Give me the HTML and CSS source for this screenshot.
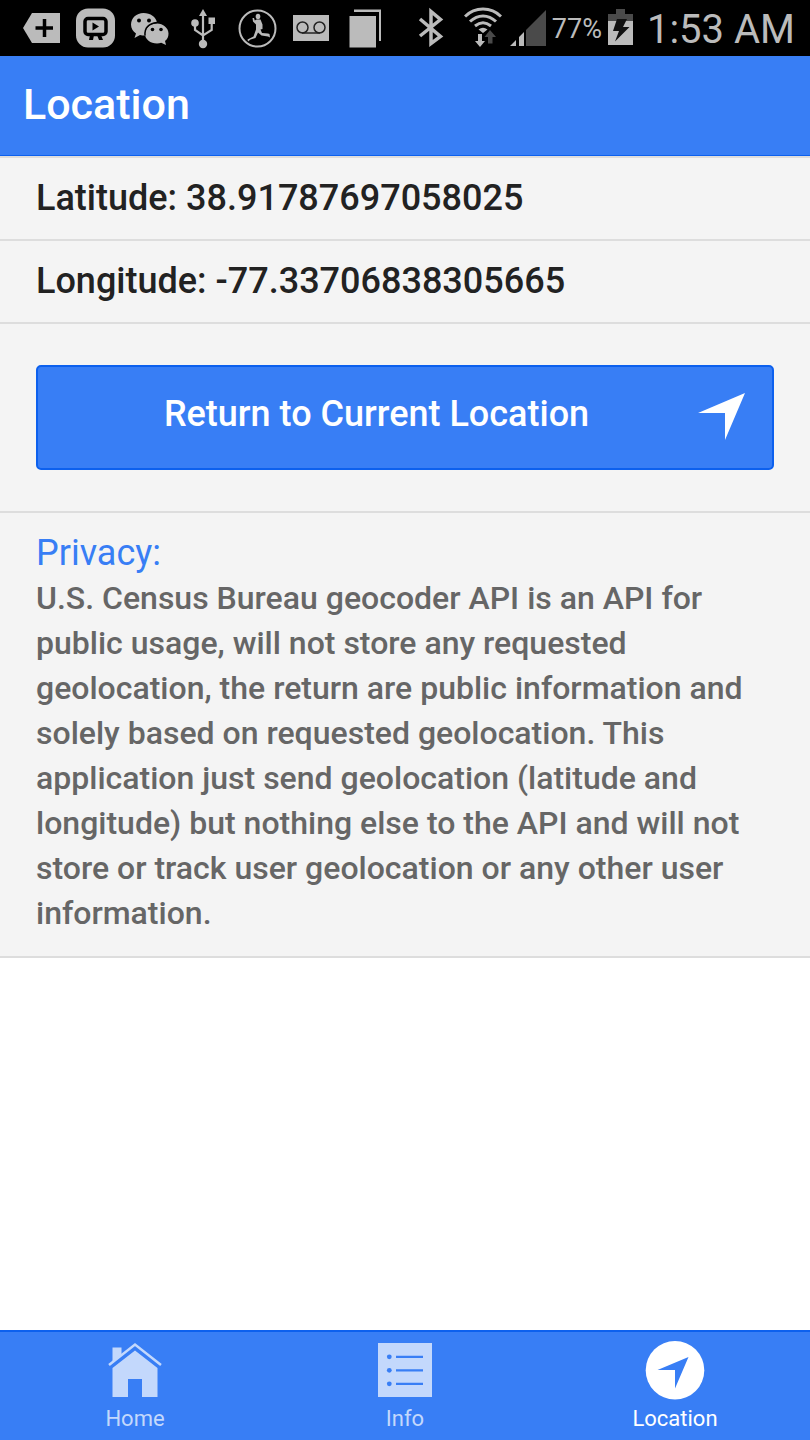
FILE: index.html
```html
<!DOCTYPE html>
<html lang="en">
<head>
<meta charset="utf-8">
<meta name="viewport" content="width=device-width, initial-scale=1">
<title>Location</title>
<link rel="stylesheet" href="styles.css">
</head>
<body>
<div class="status-bar">
  <div class="notifications">
    <svg width="54" height="56" viewBox="0 0 54 56"><path fill="currentColor" d="M9 28 18 13H46V43H18Z"/><path d="M30.500 19V37M21.500 28H39" stroke="#000" stroke-width="3.500"/></svg>
    <svg width="54" height="56" viewBox="0 0 54 56"><rect x="8" y="8.500" width="39" height="39" rx="12" fill="currentColor"/><rect x="17" y="18.500" width="21" height="16" rx="3" fill="none" stroke="#000" stroke-width="3.500"/><path d="M24.500 22.500V30.500L31 26.500ZM22 35H26L25 40H21ZM29 35H33L35 40H31Z"/></svg>
    <svg width="54" height="56" viewBox="0 0 54 56"><g transform="translate(-6)"><path fill="currentColor" d="M27.500 13C20.500 13 15 18 15 24.500c0 4 2 7 5 9L18.500 38l5.500-3c1.500.5 3 .5 5 .5C28 28 34 23 41 22.500 40 17 34.500 13 27.500 13Z"/><path fill="currentColor" d="M41 23.500c-6.500 0-12 4.500-12 10.200S34.500 43.500 41 43.500c1.500 0 3-.2 4.200-.7L50 45l-1-4c2.500-2 3.500-4.500 3.500-7.500 0-5.500-5.500-10-11.500-10Z"/><path d="M29 35.500C28.500 28 33 23.500 41 22.600" fill="none" stroke="#000" stroke-width="1.500"/><circle cx="23" cy="20.500" r="2"/><circle cx="33" cy="20.500" r="2"/><circle cx="36.500" cy="29.500" r="1.800"/><circle cx="45" cy="29.500" r="1.800"/></g></svg>
    <svg width="54" height="56" viewBox="0 0 54 56"><g fill="currentColor"><path d="M27 9 31 16H23Z"/><circle cx="27" cy="44" r="4.200"/><circle cx="19" cy="23" r="3.800"/><rect x="32.500" y="17.500" width="6.500" height="6.500"/></g><path d="M27 14V42M19 24V30L27 35.500 35.700 30V23" fill="none" stroke="currentColor" stroke-width="2.200"/></svg>
    <svg width="54" height="56" viewBox="0 0 54 56"><circle cx="27.500" cy="28.500" r="18" fill="none" stroke="currentColor" stroke-width="2"/><g fill="currentColor"><ellipse cx="28" cy="16.500" rx="2.300" ry="2.800"/><path d="M26.500 19.500H30.500L32.500 24.500V29L30.500 29.500 32 33 38 33.500 39.500 34 40 37.500 38 36.500 31.500 35.500 28 32.500 25.500 38 20.500 39.500 18 41.500 17.500 39.500 23.500 36.500 26 29.500V24.500L23 21.500 22.500 18 24 18 24.800 20.500Z"/></g></svg>
    <svg width="54" height="56" viewBox="0 0 54 56"><rect x="9" y="15" width="36" height="26" fill="currentColor"/><g fill="none" stroke="#222" stroke-width="1.500"><circle cx="18.500" cy="27.500" r="5.500"/><circle cx="35.500" cy="27.500" r="5.500"/><path d="M18 33H36"/></g></svg>
    <svg width="54" height="56" viewBox="0 0 54 56"><path fill="currentColor" d="M11.500 16H38V47.500H11.500ZM16 9.500H43V41H41V12H16Z"/></svg>
  </div>
  <div class="system">
    <svg width="26" height="56" viewBox="0 0 26 56"><path d="M2 19 22.500 36.500 13 43.500V11.500L22.500 19.500 2 36" fill="none" stroke="currentColor" stroke-width="3.500"/></svg>
    <svg class="wifi" width="38" height="56" viewBox="0 0 38 56"><g fill="none" stroke="currentColor" stroke-width="3"><path d="M1 16.500C11 6.500 27 6.500 37 16.500M6 21.500C14 14 24 14 32 21.500M11 26C16 22 22 22 27 26"/></g><path fill="currentColor" d="M14.500 29.500Q19 26 23.500 29.500L19 33ZM14 34H18V41H21L16 47 11 41H14Z"/><path fill="#4a4a4a" d="M26 30 32 37H28.500V43.500H24V37H20.500Z"/></svg>
    <svg class="signal" width="36" height="56" viewBox="0 0 36 56"><path fill="currentColor" d="M0 46 6 40V46ZM9 37 14 32V46H9Z"/><path fill="#4a4a4a" d="M16 30 36 10V46H16Z"/></svg>
    <span class="percent">77%</span>
    <svg class="battery" width="25" height="56" viewBox="0 0 25 56"><path fill="#4a4a4a" d="M8 9H17V14H25V21H0V14H8Z"/><path fill="currentColor" d="M0 21H25V45H0Z"/><path fill="#111" d="M9 19H19L15 27H21.500L7 41.500 11 31H5Z"/></svg>
    <time class="clock">1:53 AM</time>
  </div>
</div>
<header class="title-bar"><h1>Location</h1></header>
<main class="content">
  <section class="item coordinate">Latitude: 38.91787697058025</section>
  <section class="item coordinate">Longitude: -77.33706838305665</section>
  <section class="item action">
    <button class="return-button" type="button">
      <span class="button-label">Return to Current Location</span>
      <svg width="47" height="52" viewBox="0 0 47 52"><path fill="currentColor" d="M0 25 47 5 27 52V25Z"/></svg>
    </button>
  </section>
  <section class="item privacy">
    <h2>Privacy:</h2>
    <p>U.S. Census Bureau geocoder API is an API for public usage, will not store any requested geolocation, the return are public information and solely based on requested geolocation. This application just send geolocation (latitude and longitude) but nothing else to the API and will not store or track user geolocation or any other user information.</p>
  </section>
</main>
<nav class="tabs">
  <a class="tab" href="#home">
    <svg width="60" height="60" viewBox="0 0 60 60"><path fill="currentColor" d="M30 9.500 52.500 27V56H37V38H23V56H7.500V27Z"/><path d="M4 24 30 3.500 56 24" fill="none" stroke="#387ef5" stroke-width="6"/><path fill="currentColor" d="M7.500 6.500H16.500V14L7.500 21Z"/><path d="M4 24 30 3.500 56 24" fill="none" stroke="currentColor" stroke-width="2.500"/></svg>
    <span>Home</span>
  </a>
  <a class="tab" href="#info">
    <svg width="60" height="60" viewBox="0 0 60 60"><path fill="currentColor" d="M3 2H57V56H3Z"/><g fill="#387ef5"><circle cx="14.300" cy="15.800" r="2.400"/><circle cx="14.300" cy="29.300" r="2.400"/><circle cx="14.300" cy="42.800" r="2.400"/><path d="M21 14.700H48V17H21ZM21 28.200H48V30.500H21ZM21 41.700H48V44H21Z"/></g></svg>
    <span>Info</span>
  </a>
  <a class="tab active" href="#location" aria-current="page">
    <svg width="60" height="60" viewBox="0 0 60 60"><circle cx="30" cy="29.300" r="29.300" fill="currentColor"/><path fill="#387ef5" d="M12.500 29 43.500 16 30 47.500V29Z"/></svg>
    <span>Location</span>
  </a>
</nav>
</body>
</html>
```
FILE: styles.css
```css
* {
  box-sizing: border-box;
}

body {
  margin: 0;
  min-height: 100vh;
  display: flex;
  flex-direction: column;
  background: #fff;
  color: #222;
  font-family: Roboto, "Noto Sans", sans-serif;
}

svg {
  display: block;
  flex: none;
}

h1, h2, p {
  margin: 0;
}

.status-bar {
  display: flex;
  justify-content: space-between;
  height: 56px;
  padding: 0 15px 0 14px;
  background: #000;
  color: #bbb;
}

.notifications, .system {
  display: flex;
  align-items: center;
}

.wifi {
  margin-left: 20px;
}

.signal {
  margin-left: 8px;
}

.percent {
  margin-left: 6px;
  padding-top: 2px;
  font-size: 27px;
}

.battery {
  margin-left: 6px;
}

.clock {
  margin-left: 14px;
  padding-top: 2px;
  font-size: 40px;
}

.title-bar {
  padding: 0 23px 2px;
  background: #387ef5;
  border-bottom: 1px solid #0c60ee;
  color: #fff;
}

.title-bar h1 {
  font-size: 43px;
  font-weight: 500;
  line-height: 97px;
}

.content {
  flex: 1;
  border-top: 2px solid #ddd;
}

.item {
  padding: 18px 36px 20px;
  background: #f4f4f4;
  border-bottom: 2px solid #ddd;
}

.coordinate {
  padding-bottom: 18px;
  font-size: 36px;
  font-weight: 500;
  line-height: 45px;
}

.action {
  padding: 41px 36px;
}

.return-button {
  display: flex;
  align-items: center;
  width: 100%;
  height: 105px;
  padding: 0 27px 8px 17px;
  background: #387ef5;
  border: 2px solid #0c60ee;
  border-radius: 5px;
  color: #fff;
  font: 500 36px/90px Roboto, "Noto Sans", sans-serif;
}

.button-label {
  flex: 1;
}

.privacy h2 {
  color: #387ef5;
  font-size: 36px;
  font-weight: 400;
  line-height: 45px;
}

.privacy p {
  color: #666;
  font-size: 32px;
  font-weight: 500;
  line-height: 45px;
}

.tabs {
  display: flex;
  height: 110px;
  background: #387ef5;
  border-top: 2px solid #0c60ee;
}

.tab {
  flex: 1;
  display: flex;
  flex-direction: column;
  align-items: center;
  padding-top: 9px;
  color: #c3d8fc;
  font-size: 22px;
  line-height: 36px;
  text-decoration: none;
}

.active {
  color: #fff;
}
```
